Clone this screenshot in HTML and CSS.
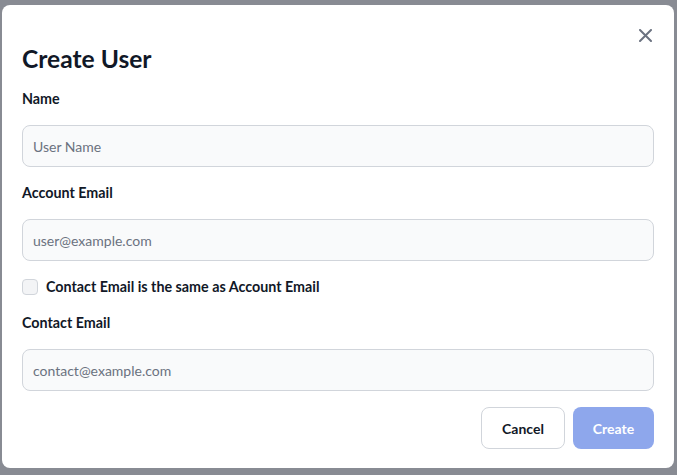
FILE: index.html
```html
<!DOCTYPE html>
<html lang="en">
<head>
<meta charset="utf-8">
<title>Create User</title>
<link rel="stylesheet" href="styles.css">
</head>
<body>
<div class="overlay">
  <div class="modal">
    <button class="close" aria-label="Close">
      <svg width="13" height="13" viewBox="0 0 13 13"><path d="M1 1L12 12M12 1L1 12" stroke="#6b7280" stroke-width="2" stroke-linecap="round"/></svg>
    </button>
    <h1 class="title">Create User</h1>
    <div class="form">
      <label class="label">Name</label>
      <input class="input" type="text" placeholder="User Name">
      <label class="label">Account Email</label>
      <input class="input" type="text" placeholder="user@example.com">
      <label class="check-row"><span class="checkbox"></span><span>Contact Email is the same as Account Email</span></label>
      <label class="label">Contact Email</label>
      <input class="input" type="text" placeholder="contact@example.com">
      <div class="actions">
        <button class="btn btn-cancel">Cancel</button>
        <button class="btn btn-create">Create</button>
      </div>
    </div>
  </div>
</div>
</body>
</html>
```
FILE: styles.css
```css
* { box-sizing: border-box; }
html, body { margin: 0; padding: 0; height: 100%; }
body {
  font-family: Lato, "Noto Sans", sans-serif;
  background: #888b93;
  color: #111827;
}
.overlay {
  padding: 5px 3px 0 2px;
}
.modal {
  position: relative;
  background: #ffffff;
  border-radius: 8px;
  width: 672px;
  height: 463px;
  padding: 38px 20px 19px 20px;
}
.close {
  position: absolute;
  top: 24px;
  right: 22px;
  width: 13px;
  height: 13px;
  padding: 0;
  border: 0;
  background: none;
  display: flex;
}
.title {
  margin: 0 0 14px 0;
  font-size: 24.6px;
  line-height: 32px;
  font-weight: 700;
  color: #111827;
}
.form {
  display: flex;
  flex-direction: column;
  gap: 16px;
}
.label {
  font-size: 14.3px;
  line-height: 20px;
  font-weight: 700;
  color: #111827;
}
.input {
  height: 42px;
  width: 100%;
  border: 1px solid #d1d5db;
  border-radius: 8px;
  background: #f9fafb;
  padding: 0 10px;
  font-family: inherit;
  font-size: 14px;
  color: #111827;
  outline: none;
}
.input::placeholder { color: #6b7280; }
.check-row {
  display: flex;
  align-items: center;
  gap: 8px;
  font-size: 14.3px;
  line-height: 20px;
  font-weight: 700;
}
.checkbox {
  width: 16px;
  height: 16px;
  border: 1px solid #d1d5db;
  border-radius: 4px;
  background: #f3f4f6;
}
.actions {
  display: flex;
  justify-content: flex-end;
  gap: 8px;
}
.btn {
  height: 42px;
  border-radius: 8px;
  font-family: inherit;
  font-size: 14px;
  font-weight: 700;
}
.btn-cancel {
  width: 84px;
  background: #ffffff;
  border: 1px solid #d1d5db;
  color: #111827;
}
.btn-create {
  width: 81px;
  background: #8ea7ec;
  border: 0;
  color: #ffffff;
}
```
